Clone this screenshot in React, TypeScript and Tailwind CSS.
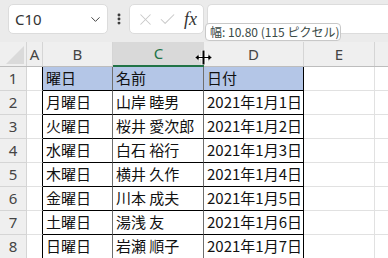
import { ChevronDown, EllipsisVertical, X, Check } from "lucide-react";

const rows = [
  ["曜日", "名前", "日付"],
  ["月曜日", "山岸 睦男", "2021年1月1日"],
  ["火曜日", "桜井 愛次郎", "2021年1月2日"],
  ["水曜日", "白石 裕行", "2021年1月3日"],
  ["木曜日", "横井 久作", "2021年1月4日"],
  ["金曜日", "川本 成夫", "2021年1月5日"],
  ["土曜日", "湯浅 友", "2021年1月6日"],
  ["日曜日", "岩瀬 順子", "2021年1月7日"],
];

const cols = "grid grid-cols-[27px_16px_70px_91px_100px_71px_1fr]";
const ui = { fontFamily: '"Noto Sans", "Open Sans", sans-serif' };
const jp = { fontFamily: '"Noto Sans CJK JP", "Noto Sans", sans-serif' };

export default function App() {
  return (
    <div className="relative w-[388px] h-[258px] overflow-hidden bg-white" style={ui}>
      {/* Formula bar */}
      <div className="h-[42px] bg-[#ebebeb] flex items-start pt-[4px] pl-[8px]">
        <div className="w-[100px] h-[30px] bg-white border border-[#dcdcdc] rounded-[5px] flex items-center pl-[6px] pr-[4px]">
          <span className="text-[15px] text-[#333] flex-1">C10</span>
          <ChevronDown className="w-[15px] h-[15px] text-[#444]" strokeWidth={1.6} />
        </div>
        <div className="w-[21px] h-[30px] flex items-center justify-center">
          <EllipsisVertical className="w-[14px] h-[14px] text-[#333]" strokeWidth={3} />
        </div>
        <div className="w-[75px] h-[30px] bg-white border border-[#dcdcdc] rounded-[5px] flex items-center pl-[6px] gap-[3px]">
          <X className="w-[19px] h-[19px] text-[#c8c8c8]" strokeWidth={1.3} />
          <Check className="w-[19px] h-[19px] text-[#c8c8c8]" strokeWidth={1.3} />
          <span className="ml-[4px] text-[18px] italic text-[#333]" style={{ fontFamily: '"Liberation Serif", serif' }}>fx</span>
        </div>
        <div className="ml-[3px] flex-1 h-[30px] bg-white border border-[#dcdcdc] rounded-l-[5px] border-r-0" />
      </div>

      {/* Column headers */}
      <div className={`${cols} h-[25px] bg-[#efefef] border-b border-[#bdbdbd] text-[15px] text-[#444]`}>
        <div className="relative border-r border-[#d5d5d5]">
          <div className="absolute right-[2px] bottom-[2px] w-0 h-0 border-l-[18px] border-l-transparent border-b-[18px] border-b-[#dadada]" />
        </div>
        <div className="flex items-center justify-center border-r border-[#d5d5d5]">A</div>
        <div className="flex items-center justify-center border-r border-[#d5d5d5]">B</div>
        <div className="flex items-center justify-center bg-[#d9d9d9] text-[#217346] border-b-2 border-[#217346] -mb-px">C</div>
        <div className="flex items-center justify-center border-r border-[#d5d5d5]">D</div>
        <div className="flex items-center justify-center border-r border-[#d5d5d5]">E</div>
        <div />
      </div>

      {/* Rows */}
      {rows.map((r, i) => (
        <div key={i} className={`${cols} h-[24px] text-[15px]`}>
          <div className="flex items-center justify-center bg-[#efefef] border-r border-b border-[#d5d5d5] text-[#444]" style={ui}>
            {i + 1}
          </div>
          <div className="border-r border-r-black border-b border-b-[#e1e1e1]" />
          {r.map((t, j) => (
            <div
              key={j}
              className={`flex items-center pl-[3px] border-b border-b-black border-r whitespace-nowrap overflow-hidden text-[#111] ${
                j === 2 ? "border-r-black" : "border-r-[#6e6e6e]"
              } ${i === 0 ? "bg-[#b4c6e7]" : ""}`}
              style={jp}
            >
              {t}
            </div>
          ))}
          <div className="border-r border-b border-[#e1e1e1]" />
          <div className="border-b border-[#e1e1e1]" />
        </div>
      ))}

      {/* Tooltip */}
      <div className="absolute left-[205px] top-[23px] w-[136px] h-[18px] bg-white border border-[#c8c8c8] rounded-[4px] flex items-center pl-[4px] text-[12px] text-[#3a4a46]" style={jp}>
        幅: 10.80 (115 ピクセル)
      </div>

      {/* Resize cursor */}
      <svg className="absolute left-[194px] top-[49px]" width="19" height="17" viewBox="0 0 19 17">
        <path d="M9.5 1v15" stroke="white" strokeWidth="4" />
        <path d="M1 8.5l4-4v3h9v-3l4 4-4 4v-3h-9v3z" fill="black" stroke="white" strokeWidth="1" />
        <path d="M9.5 1.5v14" stroke="black" strokeWidth="2" />
      </svg>
    </div>
  );
}
